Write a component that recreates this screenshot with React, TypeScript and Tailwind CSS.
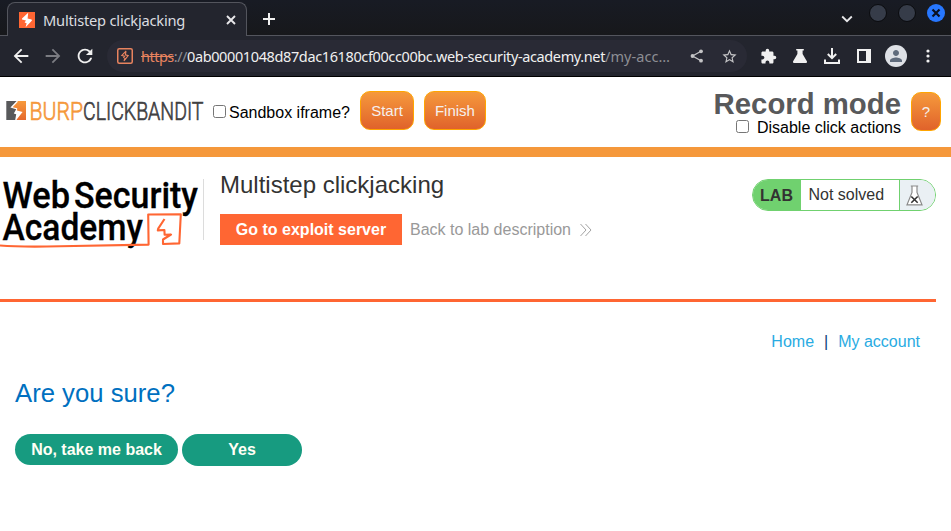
import React from "react";
import { MdArrowBack, MdArrowForward, MdRefresh, MdStarBorder, MdExtension, MdPerson } from "react-icons/md";

function Slot({ children }: { children: React.ReactNode }) {
  return <div className="flex h-8 w-8 shrink-0 items-center justify-center">{children}</div>;
}

function TitleBar() {
  return (
    <div className="flex h-[36px] items-start border-b border-[#53555d] bg-linear-to-b from-[#181b24] to-[#17181b]">
      <div className="ml-[7px] mt-[2px] flex h-[34px] w-[240px] shrink-0 items-center rounded-t-[8px] border border-b-0 border-[#53555d] bg-[#23252e] pl-[11px] pr-[8px]">
        <svg width="16" height="16" viewBox="0 0 16 16" className="shrink-0">
          <rect width="16" height="16" fill="#ff6633" />
          <path d="M9.2 0.8 L3 6.4 L3 7.6 L7 8.4 L5.6 10.6 L7.6 11.2 L6.6 15.2 L13 8.6 L12.6 7.4 L8.6 6.6Z" fill="#fff" />
        </svg>
        <span className="ml-[8px] flex-1 whitespace-nowrap font-['Noto_Sans',sans-serif] text-[14.67px] leading-5 tracking-[-0.21px] text-[#dcdde0]">Multistep clickjacking</span>
        <svg width="14" height="14" viewBox="0 0 14 14">
          <path d="M3 3 L11 11 M11 3 L3 11" stroke="#e8e8ea" strokeWidth="1.9" />
        </svg>
      </div>
      <svg width="14" height="14" viewBox="0 0 14 14" className="ml-[15px] mt-[12px]">
        <path d="M7 1 V13 M1 7 H13" stroke="#f0f0f0" strokeWidth="2" />
      </svg>
      <svg width="12" height="10" viewBox="0 0 12 10" className="ml-auto mt-[14px]">
        <path d="M1.2 2.5 L6 7.2 L10.8 2.5" fill="none" stroke="#e8e8ea" strokeWidth="1.8" />
      </svg>
      <div className="ml-[16px] mr-[6px] mt-[4px] flex gap-[11px]">
        <div className="size-[18px] rounded-full border border-[#0a0b0e] bg-[#363c49]" />
        <div className="size-[18px] rounded-full border border-[#0a0b0e] bg-[#363c49]" />
        <div className="flex size-[18px] items-center justify-center rounded-full bg-[#2777ff]">
          <svg width="10" height="10" viewBox="0 0 10 10">
            <path d="M1.5 1.5 L8.5 8.5 M8.5 1.5 L1.5 8.5" stroke="#0b1020" strokeWidth="2.2" />
          </svg>
        </div>
      </div>
    </div>
  );
}

function Toolbar() {
  return (
    <div className="flex h-[41px] items-center border-b border-black bg-[#23252e] pl-[5px] text-[#f0f0f0]">
      <Slot><MdArrowBack size={22} className="mr-px" /></Slot>
      <Slot><MdArrowForward size={22} color="#7b7c82" className="mr-px" /></Slot>
      <Slot><MdRefresh size={22} className="mr-px" /></Slot>
      <div className="ml-[6px] flex h-8 w-[640px] shrink-0 items-center rounded-full bg-[#292a35] pl-[2px] pr-[2px]">
        <Slot>
          <svg width="16" height="16" viewBox="0 0 16 16">
            <rect x="0.75" y="0.75" width="14.5" height="14.5" rx="1.5" fill="none" stroke="#e8835f" strokeWidth="1.5" />
            <path d="M9.2 3 L4.8 7.4 L7.6 8.2 L6.4 9.8 M9 3.2 L8.4 6.8 L11.2 7.6 L7 12.8 L8 9.8" fill="none" stroke="#e8835f" strokeWidth="1.1" />
          </svg>
        </Slot>
        <div className="flex-1 whitespace-nowrap font-['Noto_Sans',sans-serif] text-[14.5px] leading-5">
          <span className="tracking-[-0.5px] text-[#e8835f] line-through">https</span>
          <span className="tracking-[-0.5px] text-[#8d8e94]">://</span>
          <span className="tracking-[-0.38px] text-[#f0f0f0]">0ab00001048d87dac16180cf00cc00bc.web-security-academy.net</span>
          <span className="tracking-[0.05px] text-[#8d8e94]">/my-acc…</span>
        </div>
        <Slot>
          <svg width="14" height="14" viewBox="0 0 14 14">
            <path d="M11 2.3 L2.6 7 L11 11.7" fill="none" stroke="#c4c4c6" strokeWidth="1.3" />
            <circle cx="11" cy="2.3" r="1.9" fill="#c4c4c6" />
            <circle cx="2.5" cy="7" r="1.9" fill="#c4c4c6" />
            <circle cx="11" cy="11.7" r="1.9" fill="#c4c4c6" />
          </svg>
        </Slot>
        <Slot><MdStarBorder size={17} color="#c4c4c6" /></Slot>
      </div>
      <div className="ml-[5px] flex">
        <Slot><MdExtension size={17} /></Slot>
        <Slot>
          <svg width="14" height="14" viewBox="0 0 14 14">
            <path d="M3.2 0 H10.8 V1.5 H9.6 V5 L14 12.6 Q14.2 14 13 14 H1 Q-0.2 14 0 12.6 L4.4 5 V1.5 H3.2Z" fill="#f0f0f0" />
          </svg>
        </Slot>
        <Slot>
          <svg width="16" height="16" viewBox="0 0 16 16">
            <path d="M8 0 V10 M3.8 6 L8 10.2 L12.2 6 M1 11.5 V15 H15 V11.5" fill="none" stroke="#f0f0f0" strokeWidth="2" />
          </svg>
        </Slot>
        <Slot>
          <svg width="14" height="14" viewBox="0 0 14 14">
            <path fillRule="evenodd" d="M0 0 H14 V14 H0Z M2 2 V12 H9 V2Z" fill="#f0f0f0" />
          </svg>
        </Slot>
        <Slot>
          <div className="flex size-[22px] items-center justify-center rounded-full bg-[#dee1e6]">
            <MdPerson size={18} color="#5f6b7c" />
          </div>
        </Slot>
        <Slot>
          <svg width="4" height="14" viewBox="0 0 4 14" fill="#f0f0f0">
            <circle cx="2" cy="2" r="1.6" />
            <circle cx="2" cy="7" r="1.6" />
            <circle cx="2" cy="12" r="1.6" />
          </svg>
        </Slot>
      </div>
    </div>
  );
}

function BurpLogo() {
  return (
    <svg width="198" height="22" viewBox="0 0 198 22" className="overflow-visible">
      <defs>
        <linearGradient id="burp" x1="0" y1="0" x2="0" y2="1">
          <stop offset="0" stopColor="#f79a3c" />
          <stop offset="1" stopColor="#e5682c" />
        </linearGradient>
      </defs>
      <path d="M0.3 1 H10.6 L4.4 7.6 L10.2 9.2 L7.8 13.4 L10.2 14.2 L9.2 20 H0.3Z" fill="#58595b" />
      <path d="M11.6 1 H20 V20 H10.4 L11.4 18.4 L16.6 12 L11 10.6 L11.2 8.2 L6.6 7.2 L11.6 2Z" fill="url(#burp)" />
      <g fontFamily="Roboto, sans-serif" fontSize="26.5" fontWeight="300" strokeWidth="0.7">
        <text y="19.8" x="23.5" fill="#f5983b" stroke="#f5983b" textLength="53.5" lengthAdjust="spacingAndGlyphs">BURP</text>
        <text y="19.8" x="77" fill="#414042" stroke="#414042" textLength="120.5" lengthAdjust="spacingAndGlyphs">CLICKBANDIT</text>
      </g>
    </svg>
  );
}

function CheckBox() {
  return <span className="box-border block size-[13px] shrink-0 rounded-[2.5px] border border-[#767676] bg-white" />;
}

const orangeButton =
  "flex h-[39px] shrink-0 items-center justify-center rounded-[10px] border border-[#ffa500] bg-linear-to-b from-[#f5993c] to-[#e0622b] text-[#f5f0ee]";

function BanditBar() {
  return (
    <div className="flex h-[80px] items-start border-b-[10px] border-[#f5983b] bg-white">
      <div className="ml-[6px] mt-[23px]"><BurpLogo /></div>
      <div className="ml-[9px] mt-[26px] flex items-start gap-[3px] text-[16px] leading-5 text-black">
        <span className="mt-[2px]"><CheckBox /></span>
        <span className="whitespace-nowrap">Sandbox iframe?</span>
      </div>
      <div className={`${orangeButton} ml-[10px] mt-[14px] w-[54px] pb-0 pt-[2px] text-[15px]`}>Start</div>
      <div className={`${orangeButton} ml-[10px] mt-[14px] w-[62px] pb-0 pt-[2px] text-[15px]`}>Finish</div>
      <div className="ml-auto mt-[11px] flex flex-col items-end">
        <div className="whitespace-nowrap text-[29.33px] font-bold leading-[32px] text-[#58595b]">Record mode</div>
        <div className="-mt-px flex items-start gap-[8px] text-[16px] leading-[18px] text-black">
          <span className="mt-px"><CheckBox /></span>
          <span className="whitespace-nowrap">Disable click actions</span>
        </div>
      </div>
      <div className={`${orangeButton} ml-[10px] mr-[10px] mt-[15px] w-[30px] pt-[2px] text-[15px]`}>?</div>
    </div>
  );
}

function AcademyLogo() {
  return (
    <svg width="204" height="72" viewBox="0 0 204 72" className="overflow-visible">
      <g fontFamily="Roboto, sans-serif" fontSize="37.5" fontWeight="500" fill="#000" stroke="#000" strokeWidth="0.3">
        <text x="2.5" y="29.5" textLength="67.5" lengthAdjust="spacingAndGlyphs">Web</text>
        <text x="74" y="29.5" textLength="124" lengthAdjust="spacingAndGlyphs">Security</text>
        <text x="2.5" y="62" textLength="140.5" lengthAdjust="spacingAndGlyphs">Academy</text>
      </g>
      <path d="M0 67.5 Q20 69.2 60 68.3 T148.6 66.6 L148.2 36.5 L180.8 36.2 L179.3 65.4 L163 66 V61.5 L171 56.5 L164.6 56.8 L164.4 52 L157.8 52.4 L158.2 50.6 L164.5 41" fill="none" stroke="#ff6633" strokeWidth="2.1" strokeLinejoin="round" />
      <path d="M203.5 1 V62" stroke="#dcdcdc" strokeWidth="1" />
    </svg>
  );
}

function LabStatus() {
  return (
    <div className="flex h-[32px] w-[184px] overflow-hidden rounded-full border border-[#70d16f] text-[16px] text-[#333332]">
      <div className="flex w-[48px] items-center justify-center bg-[#70d16f] pr-px pt-px font-bold">LAB</div>
      <div className="flex flex-1 items-center whitespace-nowrap bg-white pl-[7.5px]">Not solved</div>
      <div className="flex w-[36px] items-center border-l border-[#70d16f] bg-[#eaf0f4] pl-[5.5px]">
        <svg width="17" height="21" viewBox="0 0 17 21">
          <path d="M4.8 1 H12.2 M6 1 V7.5 L1 19.8 H16 L11 7.5 V1" fill="#fff" stroke="#8b8b8b" strokeWidth="1.2" />
          <path d="M5.3 11.5 L11.7 17.8 M11.7 11.5 L5.3 17.8" stroke="#333" strokeWidth="1.6" />
        </svg>
      </div>
    </div>
  );
}

export default function App() {
  return (
    <div className="h-[531px] w-[951px] overflow-hidden bg-white font-['Liberation_Sans',Arial,sans-serif]">
      <TitleBar />
      <Toolbar />
      <BanditBar />
      <header className="mr-[15px] flex h-[145px] items-start border-b-[3px] border-[#ff6633]">
        <div className="mt-[21px]"><AcademyLogo /></div>
        <div className="ml-[16px] mt-[14px]">
          <h1 className="whitespace-nowrap text-[24px] leading-[28px] text-[#333332]">Multistep clickjacking</h1>
          <div className="mt-[15px] flex items-center text-[16px]">
            <div className="flex h-[31px] w-[182px] items-center justify-center whitespace-nowrap bg-[#ff6633] font-bold text-white">Go to exploit server</div>
            <span className="ml-[8px] whitespace-nowrap text-[#999]">Back to lab description</span>
            <svg width="12" height="14" viewBox="0 0 12 14" className="ml-[9px]">
              <path d="M0.5 1 L6 7 L0.5 13 M5.5 1 L11 7 L5.5 13" fill="none" stroke="#999" strokeWidth="0.9" />
            </svg>
          </div>
        </div>
        <div className="ml-auto mt-[22px]"><LabStatus /></div>
      </header>
      <nav className="mr-[31px] mt-[30px] flex justify-end whitespace-nowrap text-[16px] leading-5 text-[#29abe2]">
        <span>Home</span>
        <span className="mx-[10px] text-[#0b3b75]">|</span>
        <span>My account</span>
      </nav>
      <main className="ml-[15px] mt-[26px]">
        <h2 className="text-[25.7px] leading-[30px] text-[#0070c0]">Are you sure?</h2>
        <div className="mt-[26px] flex items-start gap-[4px] whitespace-nowrap text-[16px] font-bold text-[#fffff5]">
          <div className="flex h-[31px] w-[163px] items-center justify-center rounded-full bg-[#179b80]">No, take me back</div>
          <div className="flex h-[32px] w-[120px] items-center justify-center rounded-full bg-[#179b80]">Yes</div>
        </div>
      </main>
    </div>
  );
}
